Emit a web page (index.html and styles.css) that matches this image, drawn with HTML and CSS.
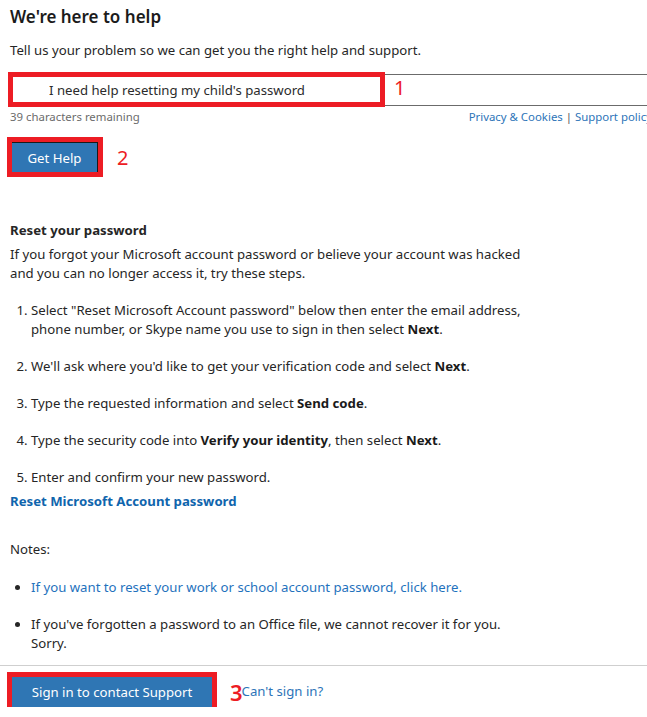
FILE: index.html
```html
<!DOCTYPE html>
<html lang="en">
<head>
<meta charset="utf-8">
<title>We're here to help</title>
<link rel="stylesheet" href="styles.css">
</head>
<body>
<main class="page">
  <h1 class="title">We're here to help</h1>
  <p class="intro">Tell us your problem so we can get you the right help and support.</p>

  <div class="form">
    <div class="input-row">
      <input class="query" type="text" value="I need help resetting my child's password">
      <span class="mark mark-box"></span>
      <span class="mark mark-num mark-1">1</span>
    </div>
    <div class="meta-row">
      <span class="remaining">39 characters remaining</span>
      <span class="policy"><a href="#">Privacy &amp; Cookies</a> | <a href="#">Support policy</a></span>
    </div>
  </div>

  <div class="action-row">
    <button class="btn btn-get">Get Help</button>
    <span class="mark-num mark-2">2</span>
  </div>

  <section class="answer">
    <h2 class="answer-title">Reset your password</h2>
    <p class="answer-text">If you forgot your Microsoft account password or believe your account was hacked and you can no longer access it, try these steps.</p>
    <ol class="steps">
      <li>Select "Reset Microsoft Account password" below then enter the email address, phone number, or Skype name you use to sign in then select <b>Next</b>.</li>
      <li>We'll ask where you'd like to get your verification code and select <b>Next</b>.</li>
      <li>Type the requested information and select <b>Send code</b>.</li>
      <li>Type the security code into <b>Verify your identity</b>, then select <b>Next</b>.</li>
      <li>Enter and confirm your new password.</li>
    </ol>
    <a class="reset-link" href="#">Reset Microsoft Account password</a>
    <p class="notes">Notes:</p>
    <ul class="note-list">
      <li><a href="#">If you want to reset your work or school account password, click here.</a></li>
      <li>If you've forgotten a password to an Office file, we cannot recover it for you. Sorry.</li>
    </ul>
  </section>

  <hr class="divider">

  <div class="footer-row">
    <button class="btn btn-sign">Sign in to contact Support</button>
    <span class="mark-num mark-3">3</span>
    <a class="cant" href="#">Can't sign in?</a>
  </div>
</main>
</body>
</html>
```
FILE: styles.css
```css
html, body {
  margin: 0;
  padding: 0;
  overflow-x: hidden;
  background: #fff;
}
body {
  font-family: "Noto Sans", "Open Sans", sans-serif;
  font-size: 13.2px;
  line-height: 19px;
  color: #262626;
}
a {
  color: #0067b8;
  text-decoration: none;
}
.page {
  padding: 5px 0 0 10px;
}
.title {
  margin: 0;
  font-size: 17px;
  line-height: 24px;
  font-weight: 600;
  color: #1b1b1b;
}
.intro {
  margin: 12px 0 0;
}

.form {
  width: 642px;
  margin-top: 14px;
}
.input-row {
  position: relative;
}
.query {
  display: block;
  box-sizing: border-box;
  width: 100%;
  height: 32px;
  margin: 0;
  padding: 0 0 0 38px;
  border: 1px solid #6b6b6b;
  border-right: none;
  font-family: inherit;
  font-size: 13.2px;
  color: #2b2b2b;
  background: #fff;
  outline: none;
}
.mark-box {
  position: absolute;
  left: -2px;
  top: -2px;
  width: 367px;
  height: 25px;
  border: 5px solid #ed1c24;
}
.mark-num {
  color: #ed1c24;
  font-size: 20px;
  line-height: 24px;
}
.mark-1 {
  position: absolute;
  left: 384px;
  top: 2px;
}
.meta-row {
  display: flex;
  justify-content: space-between;
  margin-top: 3px;
  font-size: 11.4px;
  line-height: 16px;
  white-space: nowrap;
}
.remaining {
  color: #6b6b6b;
}
.policy {
  color: #555;
}
.policy a {
  color: #2d74b8;
}

.action-row {
  display: flex;
  align-items: center;
  gap: 19px;
  margin: 17px 0 0 2px;
}
.btn {
  font-family: inherit;
  font-size: 13.2px;
  color: #fff;
  background: #2f76b4;
  border: none;
  height: 30px;
  margin: 0;
  outline: 5px solid #ed1c24;
  cursor: pointer;
}
.btn-get {
  width: 86px;
  padding: 0;
  border-top: 1px solid #1a1a1a;
  border-right: 1px solid #1a1a1a;
}
.mark-2 {
  margin-top: 2px;
}

.answer {
  margin-top: 49px;
}
.answer-title {
  margin: 0;
  font-size: 13.2px;
  line-height: 19px;
  font-weight: 700;
}
.answer-text {
  margin: 5px 0 0;
  width: 520px;
}
.steps {
  margin: 18px 0 0;
  padding-left: 21px;
  width: 500px;
}
.steps li + li {
  margin-top: 18px;
}
.steps b {
  font-weight: 700;
  color: #1a1a1a;
}
.reset-link {
  display: block;
  margin-top: 5px;
  font-weight: 700;
  color: #0f65ad;
}
.notes {
  margin: 29px 0 0;
}
.note-list {
  margin: 19px 0 0;
  padding-left: 21px;
  width: 490px;
}
.note-list li + li {
  margin-top: 18px;
}
.note-list a {
  color: #1f72bd;
}

.divider {
  margin: 12px 0 0 -10px;
  border: none;
  border-top: 1px solid #cfcfcf;
  height: 0;
}
.footer-row {
  display: flex;
  align-items: flex-start;
  margin: 11px 0 0 2px;
}
.btn-sign {
  width: 200px;
  padding: 0;
}
.mark-3 {
  margin: 3px 0 0 18px;
  font-size: 22px;
  font-weight: 600;
}
.cant {
  margin: 5px 0 0 -1px;
  color: #2d74b8;
}
```
